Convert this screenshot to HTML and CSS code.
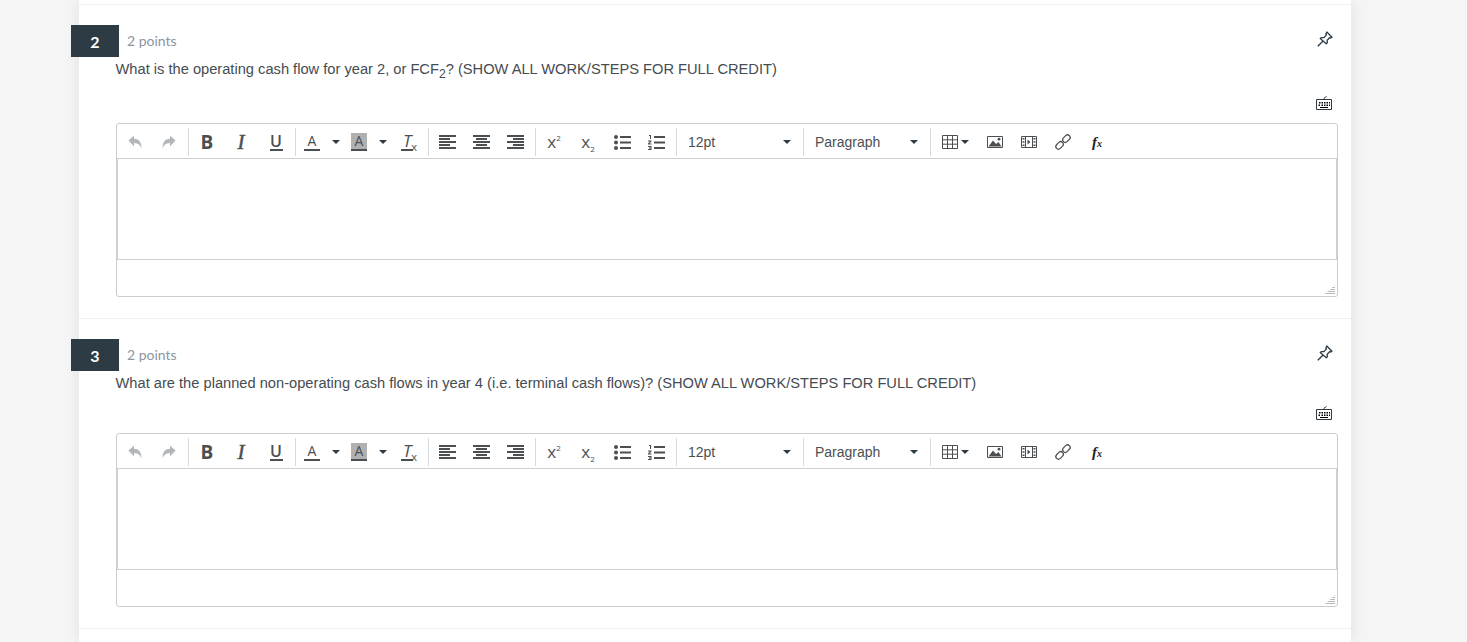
FILE: index.html
```html
<!DOCTYPE html>
<html lang="en">
<head>
<meta charset="utf-8">
<title>Quiz</title>
<link rel="stylesheet" href="styles.css">
</head>
<body>
<svg class="defs" width="0" height="0" aria-hidden="true">
  <symbol id="i-undo" viewBox="0 0 16 16"><path d="M1.500 6.500 7 1.500v3.300c4.500 0 7.500 3 7.500 9.700-1.500-4-3.500-5.300-7.500-5.300v3.300z"/></symbol>
  <symbol id="i-redo" viewBox="0 0 16 16"><path d="M14.500 6.500 9 1.500v3.300c-4.500 0-7.500 3-7.500 9.700 1.500-4 3.500-5.300 7.500-5.300v3.300z"/></symbol>
  <symbol id="i-left" viewBox="0 0 17 14"><path d="M0 0h17v2H0zM0 3h11v2H0zM0 6h17v2H0zM0 9h11v2H0zM0 12h17v2H0z"/></symbol>
  <symbol id="i-center" viewBox="0 0 17 14"><path d="M0 0h17v2H0zM3 3h11v2H3zM0 6h17v2H0zM3 9h11v2H3zM0 12h17v2H0z"/></symbol>
  <symbol id="i-right" viewBox="0 0 17 14"><path d="M0 0h17v2H0zM6 3h11v2H6zM0 6h17v2H0zM6 9h11v2H6zM0 12h17v2H0z"/></symbol>
  <symbol id="i-ul" viewBox="0 0 17 15"><circle cx="2" cy="2" r="2"/><circle cx="2" cy="7.500" r="2"/><circle cx="2" cy="13" r="2"/><path d="M6 1h11v2H6zM6 6.500h11v2H6zM6 12h11v2H6z"/></symbol>
  <symbol id="i-ol" viewBox="0 0 17 15"><path d="M1 0h2v4H2V1H1zM0 5.500h3.500v1L1.500 8.500h2v1H0v-1l2-2H0zM0 11h3.500v4H0v-1h2.500v-.5H1v-1h1.500V12H0zM6 1h11v2H6zM6 6.500h11v2H6zM6 12h11v2H6z"/></symbol>
  <symbol id="i-table" viewBox="0 0 16 14"><path fill="none" stroke="currentColor" d="M.5.500h15v13H.5zM.5 4.800h15M.5 9.200h15M5.500.500v13M10.500.500v13"/></symbol>
  <symbol id="i-image" viewBox="0 0 16 14"><path fill="none" stroke="currentColor" d="M.5 1.500h15v11H.5z"/><path d="M1.500 11.500l4.500-6 3 3.500 2.500-2 3 4.500z"/><circle cx="12" cy="4.200" r="1.400"/></symbol>
  <symbol id="i-media" viewBox="0 0 16 12"><path fill="none" stroke="currentColor" d="M.5.500h15v11H.5zM4.500.500v11M11.500.500v11"/><path d="M6.500 3.500l3 2.500-3 2.500zM1.500 2h2v1.500h-2zM1.500 5.200h2v1.500h-2zM1.500 8.500h2V10h-2zM12.500 2h2v1.500h-2zM12.500 5.200h2v1.500h-2zM12.500 8.500h2V10h-2z"/></symbol>
  <symbol id="i-link" viewBox="0 0 16 16"><g fill="none" stroke="currentColor" stroke-width="1.100"><rect x="-4.500" y="-2.300" width="7.500" height="4.600" rx="2.300" transform="translate(5.500 10.500) rotate(-45)"/><rect x="-3" y="-2.300" width="7.500" height="4.600" rx="2.300" transform="translate(10.500 5.500) rotate(-45)"/></g></symbol>
  <symbol id="i-pin" viewBox="0 0 16 16"><path fill="none" stroke="currentColor" stroke-width="1.300" stroke-linejoin="round" d="M9.800 1 15 6.200l-1.200.8-1-.5-2.600 2.700.1 2.500-1 1L3.200 7.600l1-1 2.500.1 2.700-2.600-.5-1zM5.800 10.200.8 15.200"/></symbol>
  <symbol id="i-keys" viewBox="0 0 16 14"><path fill="none" stroke="currentColor" d="M.5 3.500h15v10H.5zM8 3.500V2.200L10.500.500"/><path d="M3 6h1.500v1.500H3zM5.500 6H7v1.500H5.500zM8 6h1.500v1.500H8zM10.500 6H12v1.500h-1.500zM13 6h1v1.500h-1zM2.500 8.500H4V10H2.500zM5.500 8.500H7V10H5.500zM8 8.500h1.500V10H8zM10.500 8.500H12V10h-1.500zM13 8.500h1V10h-1zM4 11h8v1H4z"/></symbol>
</svg>

<main class="sheet">
  <section class="question">
    <header class="q-head">
      <span class="q-num">2</span>
      <span class="q-points">2 points</span>
      <svg class="pin"><use href="#i-pin"/></svg>
    </header>
    <p class="q-text has-sub">What is the operating cash flow for year 2, or FCF<sub>2</sub>? (SHOW ALL WORK/STEPS FOR FULL CREDIT)</p>
    <div class="keys-row"><svg class="keys"><use href="#i-keys"/></svg></div>
    <div class="editor">
      <div class="toolbar">
        <span class="btn off"><svg class="ic16"><use href="#i-undo"/></svg></span>
        <span class="btn off"><svg class="ic16"><use href="#i-redo"/></svg></span>
        <i class="sep"></i>
        <span class="btn"><b class="g-b">B</b></span>
        <span class="btn"><em class="g-i">I</em></span>
        <span class="btn"><span class="g-u">U</span></span>
        <i class="sep"></i>
        <span class="btn color"><span class="g-a">A</span><i class="caret"></i></span>
        <span class="btn color"><span class="g-a hl">A</span><i class="caret"></i></span>
        <span class="btn"><span class="g-t">T</span><span class="g-x">x</span></span>
        <i class="sep"></i>
        <span class="btn"><svg class="ic17"><use href="#i-left"/></svg></span>
        <span class="btn"><svg class="ic17"><use href="#i-center"/></svg></span>
        <span class="btn"><svg class="ic17"><use href="#i-right"/></svg></span>
        <i class="sep"></i>
        <span class="btn"><span class="g-sx">x<sup>2</sup></span></span>
        <span class="btn"><span class="g-sx">x<sub>2</sub></span></span>
        <span class="btn"><svg class="ic17 t15"><use href="#i-ul"/></svg></span>
        <span class="btn"><svg class="ic17 t15"><use href="#i-ol"/></svg></span>
        <i class="sep"></i>
        <span class="select"><span>12pt</span><i class="caret"></i></span>
        <i class="sep"></i>
        <span class="select"><span>Paragraph</span><i class="caret"></i></span>
        <i class="sep"></i>
        <span class="btn table"><svg class="ic16 w14"><use href="#i-table"/></svg><i class="caret"></i></span>
        <span class="btn"><svg class="ic16 w14"><use href="#i-image"/></svg></span>
        <span class="btn"><svg class="ic16 w12"><use href="#i-media"/></svg></span>
        <span class="btn"><svg class="ic18"><use href="#i-link"/></svg></span>
        <span class="btn"><span class="g-fx">f<small>x</small></span></span>
      </div>
      <div class="area"></div>
      <div class="status"><i class="grip"></i></div>
    </div>
  </section>

  <section class="question">
    <header class="q-head">
      <span class="q-num">3</span>
      <span class="q-points">2 points</span>
      <svg class="pin"><use href="#i-pin"/></svg>
    </header>
    <p class="q-text">What are the planned non-operating cash flows in year 4 (i.e. terminal cash flows)? (SHOW ALL WORK/STEPS FOR FULL CREDIT)</p>
    <div class="keys-row"><svg class="keys"><use href="#i-keys"/></svg></div>
    <div class="editor">
      <div class="toolbar">
        <span class="btn off"><svg class="ic16"><use href="#i-undo"/></svg></span>
        <span class="btn off"><svg class="ic16"><use href="#i-redo"/></svg></span>
        <i class="sep"></i>
        <span class="btn"><b class="g-b">B</b></span>
        <span class="btn"><em class="g-i">I</em></span>
        <span class="btn"><span class="g-u">U</span></span>
        <i class="sep"></i>
        <span class="btn color"><span class="g-a">A</span><i class="caret"></i></span>
        <span class="btn color"><span class="g-a hl">A</span><i class="caret"></i></span>
        <span class="btn"><span class="g-t">T</span><span class="g-x">x</span></span>
        <i class="sep"></i>
        <span class="btn"><svg class="ic17"><use href="#i-left"/></svg></span>
        <span class="btn"><svg class="ic17"><use href="#i-center"/></svg></span>
        <span class="btn"><svg class="ic17"><use href="#i-right"/></svg></span>
        <i class="sep"></i>
        <span class="btn"><span class="g-sx">x<sup>2</sup></span></span>
        <span class="btn"><span class="g-sx">x<sub>2</sub></span></span>
        <span class="btn"><svg class="ic17 t15"><use href="#i-ul"/></svg></span>
        <span class="btn"><svg class="ic17 t15"><use href="#i-ol"/></svg></span>
        <i class="sep"></i>
        <span class="select"><span>12pt</span><i class="caret"></i></span>
        <i class="sep"></i>
        <span class="select"><span>Paragraph</span><i class="caret"></i></span>
        <i class="sep"></i>
        <span class="btn table"><svg class="ic16 w14"><use href="#i-table"/></svg><i class="caret"></i></span>
        <span class="btn"><svg class="ic16 w14"><use href="#i-image"/></svg></span>
        <span class="btn"><svg class="ic16 w12"><use href="#i-media"/></svg></span>
        <span class="btn"><svg class="ic18"><use href="#i-link"/></svg></span>
        <span class="btn"><span class="g-fx">f<small>x</small></span></span>
      </div>
      <div class="area"></div>
      <div class="status"><i class="grip"></i></div>
    </div>
  </section>
</main>
</body>
</html>
```

FILE: styles.css
```css
* { box-sizing: border-box; }
html, body { margin: 0; height: 642px; overflow: hidden; }
body { background: #f5f5f5; font-family: "Liberation Sans", Arial, sans-serif; color: #454c52; }
.defs { display: block; height: 0; }
.sheet { width: 1272px; height: 642px; margin-left: 79px; padding-top: 4px; background: #fff; box-shadow: 0 0 14px rgba(0,0,0,.09); }
.question { border-top: 1px solid #f1f1f1; padding: 20px 13px 21px 37px; }
.question:last-child { border-bottom: 1px solid #f1f1f1; }
.q-head { display: flex; align-items: center; height: 32px; margin-left: -45px; }
.q-num { width: 48px; height: 32px; display: flex; align-items: center; justify-content: center; background: #2d3b45; color: #fff; font: 700 16px "Lato", sans-serif; }
.q-points { margin-left: 8px; margin-top: -1px; font: 14px "Lato", sans-serif; color: #8b969e; }
.pin { width: 16px; height: 16px; margin-left: auto; margin-right: 5px; margin-top: -4px; color: #2d3b45; }
.q-text { margin: 1px 0 0 -.5px; font-size: 14.667px; line-height: 22px; }
.q-text.has-sub { padding-bottom: 4px; }
.q-text sub { line-height: 0; }
.keys-row { display: flex; justify-content: flex-end; padding: 12px 6px 13px 0; }
.keys { width: 16px; height: 14px; color: #2d3b45; display: block; }

.editor { width: 1222px; height: 174px; border: 1px solid #c7cdd1; border-radius: 3px; display: flex; flex-direction: column; }
.toolbar { height: 34px; flex: none; display: flex; align-items: center; padding: 2px 0 0 1px; color: #4c4f52; }
.toolbar svg { fill: currentColor; display: block; }
.btn { width: 34px; height: 34px; flex: none; display: flex; align-items: center; justify-content: center; }
.btn.off { color: #b4b7ba; }
.sep { width: 1px; height: 28px; background: #d6dadc; flex: none; margin: 0 2px; }
.ic16 { width: 16px; height: 16px; }
.ic17 { width: 17px; height: 14px; margin-right: 2px; }
.ic17.t15 { height: 15px; }
.ic18 { width: 18px; height: 18px; }
.w14 { height: 14px; }
.w12 { height: 12px; }

.g-b { font: 700 19px "Open Sans", sans-serif; margin-left: -2px; }
.g-i { font: italic 400 21px "Liberation Serif", serif; -webkit-text-stroke: .5px #4c4f52; margin-left: -2px; }
.g-u { font: 600 16px/15px "Open Sans", sans-serif; border-bottom: 2px solid #4c4f52; height: 17px; width: 13px; text-align: center; }
.btn.color { width: 47px; justify-content: flex-start; padding-left: 6px; }
.g-a { width: 16px; height: 18px; font: 400 14px/16px "Open Sans", sans-serif; text-align: center; border-bottom: 2px solid #4c4f52; }
.g-a.hl { background: #aeb0b2; }
.caret { width: 0; height: 0; border: 4px solid transparent; border-top-color: #2d3b45; border-bottom: 0; flex: none; }
.color .caret { margin-left: 12px; }
.g-t { font: italic 400 17px/16px "Open Sans", sans-serif; border-bottom: 2px solid #4c4f52; padding: 0 2px; height: 18px; }
.g-x { font: 11px "Open Sans", sans-serif; margin: 8px 0 0 -2px; }
.g-sx { font: 400 17px/18px "Open Sans", sans-serif; margin-left: -2px; }
.g-sx sup, .g-sx sub { font-size: 8px; line-height: 0; }
.select { flex: none; width: 122px; display: flex; align-items: center; justify-content: space-between; height: 34px; padding: 0 10px 0 9px; font-size: 14px; color: #4c4f52; }
.btn.table { width: 45px; justify-content: flex-start; padding-left: 9px; }
.table .caret { margin-left: 3px; }
.g-fx { font: italic 700 15px "Liberation Serif", serif; color: #222; }
.g-fx small { font-size: 10px; }

.area { height: 102px; flex: none; border: 1px solid #cfd2d4; background: #fff; }
.status { flex: 1; position: relative; }
.grip { position: absolute; right: 2px; bottom: 2px; width: 10px; height: 9px; background: repeating-linear-gradient(to bottom, #b5b9bc 0 1px, transparent 1px 2px); clip-path: polygon(100% 0, 100% 100%, 0 100%); }
```
